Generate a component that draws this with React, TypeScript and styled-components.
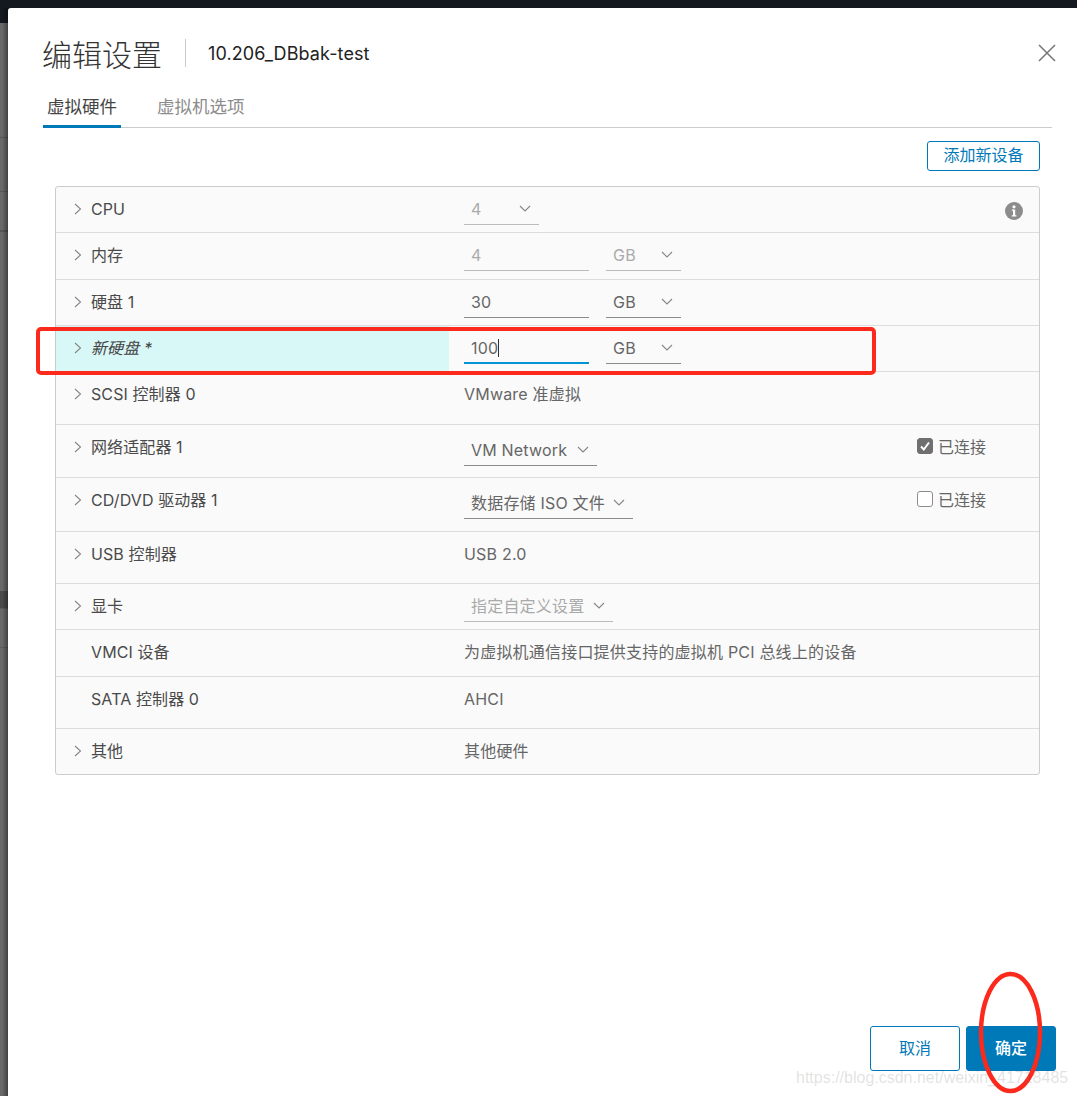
import React from "react"
import styled, { createGlobalStyle } from 'styled-components'

const Global = createGlobalStyle`
  html, body {
    margin: 0;
    padding: 0;
    background: #14191f;
  }
  body {
    font-family: Inter, "Noto Sans CJK SC", "Liberation Sans", sans-serif;
  }
`;

const Page = styled.div`
  position: relative;
  width: 1077px;
  height: 1096px;
  overflow: hidden;
  display: flex;
  flex-direction: column;
`;

const TopBar = styled.div`
  height: 8px;
  flex: none;
  background: #14191f;
`;

const Body = styled.div`
  flex: 1;
  display: flex;
  min-height: 0;
`;

const Backdrop = styled.div`
  width: 8px;
  flex: none;
  background:
    linear-gradient(to right, rgba(0, 0, 0, 0) 30%, rgba(0, 0, 0, 0.38) 100%),
    linear-gradient(to bottom,
      #14191f 0, #14191f 15px,
      #686868 15px, #686868 129px, #565656 129px, #565656 130px,
      #686868 130px, #686868 183px, #565656 183px, #565656 184px,
      #686868 184px, #686868 222px, #565656 222px, #565656 224px,
      #686868 224px, #686868 583px, #4a4a4a 583px, #4a4a4a 600px, #5a5a5a 600px, #5a5a5a 601px,
      #686868 601px, #686868 639px, #5a5a5a 639px, #5a5a5a 640px,
      #686868 640px, #686868 100%);
`;

const Modal = styled.div`
  flex: 1;
  background: #fff;
  border-top-left-radius: 3px;
  padding: 0 25px 0 35px;
  display: flex;
  flex-direction: column;
  min-width: 0;
`;

const Header = styled.div`
  height: 75px;
  padding-top: 15px;
  box-sizing: border-box;
  display: flex;
  align-items: center;
  flex: none;
`;

const Title = styled.h1`
  margin: -1px 0 0 -1px;
  font-size: 30px;
  font-weight: 300;
  color: #333;
  padding-right: 23px;
`;

const TitleSep = styled.span`
  width: 1px;
  height: 28px;
  background: #ccc;
  margin-right: 22px;
`;

const VmName = styled.span`
  font-size: 18px;
  letter-spacing: 0.1px;
  color: #222;
  flex: 1;
`;

const CloseButton = styled.button`
  border: 0;
  background: none;
  padding: 0;
  width: 18px;
  height: 18px;
  margin-right: -4px;
  display: flex;
  color: #747474;
`;

const Tabs = styled.div`
  display: flex;
  height: 45px;
  flex: none;
  border-bottom: 1px solid #ccc;
  box-sizing: border-box;
`;

const Tab = styled.div<{ $active?: boolean }>`
  width: ${p => (p.$active ? '78px' : 'auto')};
  margin-right: 36px;
  box-sizing: border-box;
  height: 45px;
  padding: 14px 0 0 ${p => (p.$active ? '4px' : '0')};
  font-size: 17.5px;
  line-height: 20px;
  white-space: nowrap;
  color: ${p => (p.$active ? '#444' : '#8c8c8c')};
  border-bottom: ${p => (p.$active ? '3px solid #0079b8' : '0')};
`;

const Toolbar = styled.div`
  height: 58px;
  flex: none;
  display: flex;
  justify-content: flex-end;
  align-items: flex-start;
  padding: 13px 12px 0 0;
  box-sizing: border-box;
`;

const OutlineButton = styled.button<{ $w: number; $h: number }>`
  width: ${p => p.$w}px;
  height: ${p => p.$h}px;
  background: #fff;
  border: 1px solid #0079b8;
  border-radius: 3px;
  color: #0079b8;
  font: inherit;
  font-size: 16px;
  line-height: 20px;
  padding: 0 0 2px;
`;

const PrimaryButton = styled(OutlineButton)`
  background: #0079b8;
  color: #fff;
  font-weight: 500;
`;

const Table = styled.div`
  margin: 0 12px;
  border: 1px solid #ccc;
  border-radius: 3px;
  background: #fafafa;
  flex: none;
`;

const Row = styled.div<{ $h: number }>`
  height: ${p => p.$h}px;
  box-sizing: border-box;
  border-bottom: 1px solid #ddd;
  display: flex;
  &:last-child { border-bottom: 0; }
`;

const LabelCell = styled.div<{ $fresh?: boolean }>`
  width: 393px;
  flex: none;
  box-sizing: border-box;
  display: flex;
  align-items: flex-start;
  padding-top: 12px;
  background: ${p => (p.$fresh ? '#d8f7f7' : 'transparent')};
  font-style: ${p => (p.$fresh ? 'italic' : 'normal')};
  color: ${p => (p.$fresh ? '#444' : '#4a4a4a')};
  font-size: 16px;
  letter-spacing: 0.1px;
  line-height: 20px;
`;

const Chevron = styled.span`
  width: 35px;
  flex: none;
  display: flex;
  justify-content: flex-end;
  padding-right: 9px;
  box-sizing: border-box;
  height: 20px;
  align-items: center;
  color: #868686;
`;

const NoChevron = styled.span`
  width: 35px;
  flex: none;
`;

const ValueCell = styled.div`
  flex: 1;
  padding: 12px 0 0 15px;
  display: flex;
  align-items: flex-start;
  font-size: 16px;
  letter-spacing: 0.2px;
  line-height: 20px;
  white-space: nowrap;
  color: #666;
`;

const Field = styled.div<{ $w: number; $gap?: number; $off?: boolean; $focus?: boolean; $top?: number }>`
  width: ${p => p.$w}px;
  margin-right: ${p => p.$gap ?? 0}px;
  margin-top: ${p => p.$top ?? 0}px;
  height: 26px;
  box-sizing: border-box;
  padding: 0 0 0 7px;
  display: flex;
  align-items: flex-start;
  justify-content: space-between;
  line-height: 20px;
  color: ${p => (p.$off ? '#aaa' : '#666')};
  border-bottom: ${p => (p.$focus ? '2px solid #0094d2' : `1px solid ${p.$off ? '#bbb' : '#8c8c8c'}`)};
`;

const Caret = styled.span`
  display: inline-block;
  width: 1px;
  height: 18px;
  background: #333;
  vertical-align: -3px;
`;

const DropArrow = styled.span`
  display: flex;
  height: 20px;
  align-items: center;
  padding-right: 8px;
  color: #868686;
`;

const Connected = styled.label`
  margin-left: auto;
  margin-right: 53px;
  display: flex;
  align-items: flex-start;
  gap: 5px;
  font-size: 16px;
  letter-spacing: 0;
  line-height: 20px;
  color: #666;
`;

const Box = styled.span<{ $on?: boolean }>`
  width: 16px;
  height: 16px;
  margin-top: 1px;
  box-sizing: border-box;
  border-radius: 3px;
  display: flex;
  border: 1px solid ${p => (p.$on ? '#6f6f6f' : '#8c8c8c')};
  background: ${p => (p.$on ? '#6f6f6f' : '#fff')};
`;

const InfoSlot = styled.span`
  margin-left: auto;
  margin-right: 16px;
  margin-top: 3px;
  display: flex;
  color: #8c8c8c;
`;

const Spacer = styled.div`
  flex: 1;
`;

const Footer = styled.div`
  flex: none;
  display: flex;
  justify-content: flex-end;
  gap: 6px;
  margin-right: -4px;
  padding-bottom: 25px;
`;

const RedBox = styled.div`
  position: absolute;
  left: 36px;
  top: 327px;
  width: 840px;
  height: 48px;
  box-sizing: border-box;
  border: 4px solid #fb2a1c;
  border-radius: 5px;
`;

const RedOval = styled.svg`
  position: absolute;
  left: 976px;
  top: 970px;
  pointer-events: none;
`;

const Watermark = styled.div`
  position: absolute;
  left: 796px;
  top: 1068px;
  font-family: "Liberation Sans", sans-serif;
  font-size: 16px;
  line-height: 20px;
  color: rgba(120, 120, 120, 0.22);
  white-space: nowrap;
  pointer-events: none;
`;

const ChevronRight = () => (
  <svg width="8" height="12" viewBox="0 0 8 12" fill="none" stroke="currentColor" strokeWidth="1.1">
    <path d="M1 1l5.5 5L1 11" />
  </svg>
)

const ChevronDown = () => (
  <svg width="12" height="8" viewBox="0 0 12 8" fill="none" stroke="currentColor" strokeWidth="1.1">
    <path d="M1 1l5 5 5-5" />
  </svg>
)

const Select = ({ value, w, gap, off, top }: { value: string; w: number; gap?: number; off?: boolean; top?: number }) => (
  <Field $w={w} $gap={gap} $off={off} $top={top}>
    <span>{value}</span>
    <DropArrow><ChevronDown /></DropArrow>
  </Field>
)

const Label = ({ text, fresh, plain }: { text: string; fresh?: boolean; plain?: boolean }) => (
  <LabelCell $fresh={fresh}>
    {plain ? <NoChevron /> : <Chevron><ChevronRight /></Chevron>}
    <span>{text}</span>
  </LabelCell>
)

const ConnectedBox = ({ on }: { on?: boolean }) => (
  <Connected>
    <Box $on={on}>
      {on && (
        <svg width="14" height="14" viewBox="0 0 14 14" fill="none" stroke="#fff" strokeWidth="2">
          <path d="M3 7.5l2.8 3L11 3.5" />
        </svg>
      )}
    </Box>
    已连接
  </Connected>
)

const App = () => {
  return (
    <Page>
      <Global />
      <TopBar />
      <Body>
        <Backdrop />
        <Modal>
          <Header>
            <Title>编辑设置</Title>
            <TitleSep />
            <VmName>10.206_DBbak-test</VmName>
            <CloseButton aria-label="关闭">
              <svg width="18" height="18" viewBox="0 0 18 18" fill="none" stroke="currentColor" strokeWidth="1.5">
                <path d="M1 1l16 16M17 1L1 17" />
              </svg>
            </CloseButton>
          </Header>
          <Tabs>
            <Tab $active>虚拟硬件</Tab>
            <Tab>虚拟机选项</Tab>
          </Tabs>
          <Toolbar>
            <OutlineButton $w={113} $h={30}>添加新设备</OutlineButton>
          </Toolbar>
          <Table>
            <Row $h={46}>
              <Label text="CPU" />
              <ValueCell>
                <Select value="4" w={75} off />
                <InfoSlot>
                  <svg width="18" height="18" viewBox="0 0 18 18">
                    <circle cx="9" cy="9" r="9" fill="currentColor" />
                    <circle cx="9" cy="4.8" r="1.6" fill="#fff" />
                    <path d="M6.8 7.5h3.4v5.7h1.2v1.3H6.8v-1.3H8V8.8H6.8z" fill="#fff" />
                  </svg>
                </InfoSlot>
              </ValueCell>
            </Row>
            <Row $h={47}>
              <Label text="内存" />
              <ValueCell>
                <Field $w={125} $gap={17} $off><span>4</span></Field>
                <Select value="GB" w={75} off />
              </ValueCell>
            </Row>
            <Row $h={46}>
              <Label text="硬盘 1" />
              <ValueCell>
                <Field $w={125} $gap={17}><span>30</span></Field>
                <Select value="GB" w={75} />
              </ValueCell>
            </Row>
            <Row $h={46}>
              <Label text="新硬盘 *" fresh />
              <ValueCell>
                <Field $w={125} $gap={17} $focus><span>100<Caret /></span></Field>
                <Select value="GB" w={75} />
              </ValueCell>
            </Row>
            <Row $h={53}>
              <Label text="SCSI 控制器 0" />
              <ValueCell>VMware 准虚拟</ValueCell>
            </Row>
            <Row $h={53}>
              <Label text="网络适配器 1" />
              <ValueCell>
                <Select value="VM Network" w={133} top={3} />
                <ConnectedBox on />
              </ValueCell>
            </Row>
            <Row $h={54}>
              <Label text="CD/DVD 驱动器 1" />
              <ValueCell>
                <Select value="数据存储 ISO 文件" w={169} top={3} />
                <ConnectedBox />
              </ValueCell>
            </Row>
            <Row $h={52}>
              <Label text="USB 控制器" />
              <ValueCell>USB 2.0</ValueCell>
            </Row>
            <Row $h={46}>
              <Label text="显卡" />
              <ValueCell>
                <Select value="指定自定义设置" w={149} off />
              </ValueCell>
            </Row>
            <Row $h={47}>
              <Label text="VMCI 设备" plain />
              <ValueCell>为虚拟机通信接口提供支持的虚拟机 PCI 总线上的设备</ValueCell>
            </Row>
            <Row $h={52}>
              <Label text="SATA 控制器 0" plain />
              <ValueCell>AHCI</ValueCell>
            </Row>
            <Row $h={45}>
              <Label text="其他" />
              <ValueCell>其他硬件</ValueCell>
            </Row>
          </Table>
          <Spacer />
          <Footer>
            <OutlineButton $w={90} $h={45}>取消</OutlineButton>
            <PrimaryButton $w={90} $h={45}>确定</PrimaryButton>
          </Footer>
        </Modal>
      </Body>
      <RedBox />
      <RedOval width="70" height="126" viewBox="0 0 70 126" fill="none">
        <ellipse cx="34.5" cy="62.5" rx="29.5" ry="58.5" stroke="#fb2a1c" strokeWidth="4.5" />
      </RedOval>
      <Watermark>https://blog.csdn.net/weixin_41718485</Watermark>
    </Page>
  )
}

export default App
